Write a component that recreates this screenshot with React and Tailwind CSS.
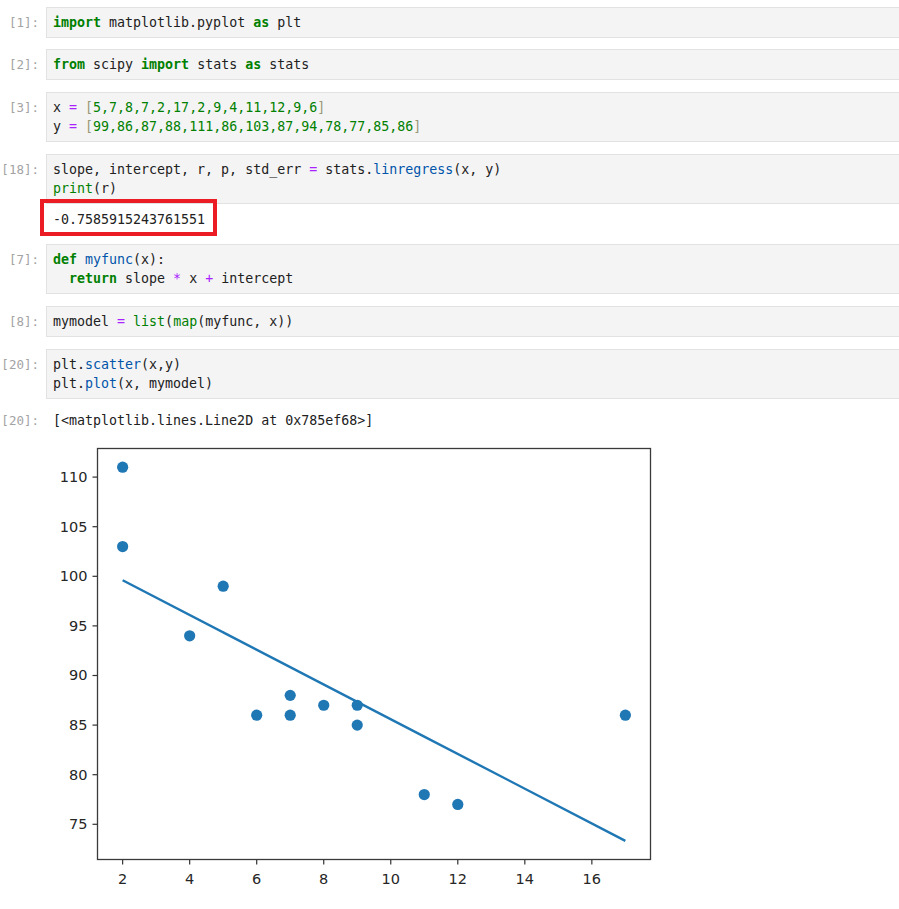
import React from 'react';

const xs = [5, 7, 8, 7, 2, 17, 2, 9, 4, 11, 12, 9, 6];
const ys = [99, 86, 87, 88, 111, 86, 103, 87, 94, 78, 77, 85, 86];

// least squares, same as stats.linregress
const n = xs.length;
const mx = xs.reduce((a, b) => a + b, 0) / n;
const my = ys.reduce((a, b) => a + b, 0) / n;
let sxy = 0;
let sxx = 0;
xs.forEach((v, i) => {
  sxy += (v - mx) * (ys[i] - my);
  sxx += (v - mx) * (v - mx);
});
const slope = sxy / sxx;
const intercept = my - slope * mx;
const model = xs.map((v) => slope * v + intercept);

// axes box in page coords
const L = 97.5, R = 650.5, T = 448.5, B = 859.5;
const xMin = 1.25, xMax = 17.75;
const allY = ys.concat(model);
const yLo = Math.min(...allY), yHi = Math.max(...allY);
const yMin = yLo - 0.05 * (yHi - yLo);
const yMax = yHi + 0.05 * (yHi - yLo);
const px = (v) => L + ((v - xMin) / (xMax - xMin)) * (R - L);
const py = (v) => B - ((v - yMin) / (yMax - yMin)) * (B - T);

const mono = { fontFamily: "'DejaVu Sans Mono', 'Liberation Mono', monospace" };

const Kw = ({ children }) => <span className="font-bold text-[#008000]">{children}</span>;
const Bi = ({ children }) => <span className="text-[#008000]">{children}</span>;
const Op = ({ children }) => <span className="text-[#aa22ff]">{children}</span>;
const Pr = ({ children }) => <span className="text-[#0055aa]">{children}</span>;
const Br = ({ children }) => <span className="text-[#999977]">{children}</span>;

const Cell = ({ prompt, children, className = '' }) => (
  <div className={`flex ${className}`}>
    <div className="w-[46px] shrink-0 pr-[7px] pt-[6px] text-right text-[12.5px] leading-[19px] text-[#a3a3a3]">
      {prompt}
    </div>
    <div className="flex-1 border border-r-0 border-[#e2e2e2] bg-[#f4f4f4] px-[6px] py-[5px] text-[13.3px] leading-[19px] text-[#212121] whitespace-pre">
      {children}
    </div>
  </div>
);

const Plot = () => {
  const yticks = [75, 80, 85, 90, 95, 100, 105, 110];
  const xticks = [2, 4, 6, 8, 10, 12, 14, 16];
  return (
    <svg width="899" height="469" viewBox="0 440 899 469" className="block">
      <g fontFamily="'DejaVu Sans', sans-serif" fontSize="14.5" fill="#262626">
        {yticks.map((t) => (
          <g key={t}>
            <line x1={L - 5} x2={L} y1={py(t)} y2={py(t)} stroke="#333" strokeWidth="1.2" />
            <text x={L - 10} y={py(t) + 5} textAnchor="end">{t}</text>
          </g>
        ))}
        {xticks.map((t) => (
          <g key={t}>
            <line x1={px(t)} x2={px(t)} y1={B} y2={B + 5} stroke="#333" strokeWidth="1.2" />
            <text x={px(t)} y={B + 24} textAnchor="middle">{t}</text>
          </g>
        ))}
      </g>
      <polyline
        points={xs.map((v, i) => `${px(v)},${py(model[i])}`).join(' ')}
        fill="none"
        stroke="#1f77b4"
        strokeWidth="2.4"
      />
      {xs.map((v, i) => (
        <circle key={i} cx={px(v)} cy={py(ys[i])} r="5.6" fill="#1f77b4" />
      ))}
      <rect x={L} y={T} width={R - L} height={B - T} fill="none" stroke="#3a3a3a" strokeWidth="1.3" />
    </svg>
  );
};

const App = () => {
  return (
    <div className="w-[899px] h-[909px] overflow-hidden bg-white pt-[7px]" style={mono}>
      <Cell prompt="[1]:">
        <Kw>import</Kw> matplotlib.pyplot <Kw>as</Kw> plt
      </Cell>

      <Cell prompt="[2]:" className="mt-[11px]">
        <Kw>from</Kw> scipy <Kw>import</Kw> stats <Kw>as</Kw> stats
      </Cell>

      <Cell prompt="[3]:" className="mt-[12px]">
        x <Op>=</Op> <Br>[</Br><Bi>5,7,8,7,2,17,2,9,4,11,12,9,6</Bi><Br>]</Br>
        {'\n'}y <Op>=</Op> <Br>[</Br><Bi>99,86,87,88,111,86,103,87,94,78,77,85,86</Bi><Br>]</Br>
      </Cell>

      <Cell prompt="[18]:" className="mt-[12px]">
        slope, intercept, r, p, std_err <Op>=</Op> stats.<Pr>linregress</Pr>(x, y)
        {'\n'}<Bi>print</Bi>(r)
      </Cell>

      {/* print output, with the red annotation box */}
      <div className="relative h-[40px] pl-[53px] pt-[6px] text-[13.3px] leading-[19px] text-[#212121]">
        -0.7585915243761551
        <div className="absolute left-[40px] top-[-5px] w-[177px] h-[37px] border-4 border-[#ec1c24]" />
      </div>

      <Cell prompt="[7]:">
        <Kw>def</Kw> <span className="text-[#0055aa]">myfunc</span>(x):
        {'\n'}  <Kw>return</Kw> slope <Op>*</Op> x <Op>+</Op> intercept
      </Cell>

      <Cell prompt="[8]:" className="mt-[12px]">
        mymodel <Op>=</Op> <Bi>list</Bi>(<Bi>map</Bi>(myfunc, x))
      </Cell>

      <Cell prompt="[20]:" className="mt-[12px]">
        plt.<Pr>scatter</Pr>(x,y)
        {'\n'}plt.<Pr>plot</Pr>(x, mymodel)
      </Cell>

      <div className="flex h-[41px] pt-[12px] text-[13.3px] leading-[19px]">
        <div className="w-[46px] shrink-0 pr-[7px] text-right text-[12.5px] text-[#a3a3a3]">[20]:</div>
        <div className="pl-[7px] text-[#212121]">[&lt;matplotlib.lines.Line2D at 0x785ef68&gt;]</div>
      </div>

      <Plot />
    </div>
  );
};

export default App;
